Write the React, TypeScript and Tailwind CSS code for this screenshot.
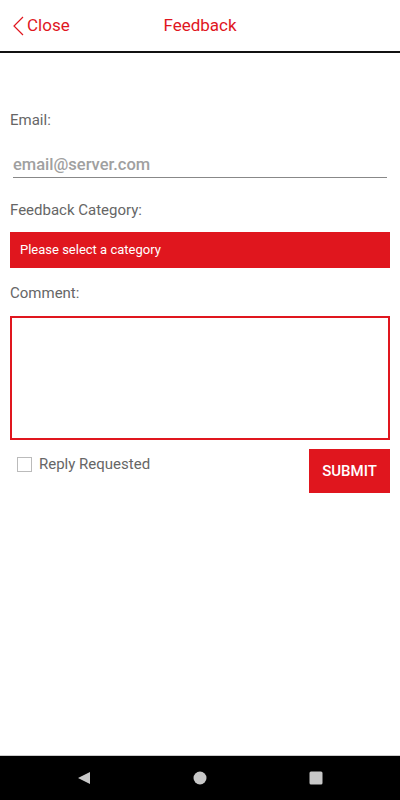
import React from "react";

const RED = "#e0161e";

export default function App() {
  return (
    <div className="flex h-[800px] w-[400px] flex-col bg-white font-['Roboto',sans-serif]">
      <div className="relative flex h-[53px] items-center border-b-2 border-[#111]">
        <div className="flex items-center pl-[12px] text-[17px] text-[#e0161e]">
          <svg width={12} height={20} viewBox="0 0 12 20" fill="none" stroke={RED} strokeWidth={1.2}>
            <path d="M11 1L2 10l9 9" />
          </svg>
          <span className="ml-[3px]">Close</span>
        </div>
        <div className="absolute left-0 right-0 text-center text-[17px] text-[#e0161e] pointer-events-none">
          Feedback
        </div>
      </div>

      <div className="flex flex-col px-[10px]">
        <div className="mt-[57px] text-[15px] leading-[20px] text-[#666]">Email:</div>
        <div className="mx-[3px] mt-[24px] border-b border-[#888] pb-[1px] text-[16.5px] font-medium leading-[22px] text-[#a0a0a0]">
          email@server.com
        </div>
        <div className="mt-[22px] text-[15px] leading-[20px] text-[#666]">Feedback Category:</div>
        <div className="mt-[12px] flex h-[36px] items-center bg-[#e0161e] px-[10px] text-[13px] text-white">
          Please select a category
        </div>
        <div className="mt-[15px] text-[15px] leading-[20px] text-[#666]">Comment:</div>
        <div className="mt-[13px] h-[124px] border-2 border-[#e0161e]"></div>
        <div className="mt-[9px] flex items-start justify-between">
          <div className="mt-[4px] flex items-center pl-[7px]">
            <div className="h-[15px] w-[15px] border border-[#bbb]"></div>
            <span className="ml-[7px] text-[15px] text-[#666]">Reply Requested</span>
          </div>
          <div className="flex h-[44px] w-[81px] items-center justify-center bg-[#e0161e] text-[15px] font-medium text-white">
            SUBMIT
          </div>
        </div>
      </div>

      <div className="flex-1"></div>
      <div className="flex h-[45px] items-center justify-center gap-[102px] border-t border-[#ccc] bg-black">
        <svg width={14} height={14} viewBox="0 0 14 14">
          <path d="M13 1v12L1 7z" fill="#c8c8c8" />
        </svg>
        <svg width={14} height={14} viewBox="0 0 14 14">
          <circle cx={7} cy={7} r={6.5} fill="#c8c8c8" />
        </svg>
        <svg width={14} height={14} viewBox="0 0 14 14">
          <rect x={0.5} y={0.5} width={13} height={13} rx={1.5} fill="#c8c8c8" />
        </svg>
      </div>
    </div>
  );
}
